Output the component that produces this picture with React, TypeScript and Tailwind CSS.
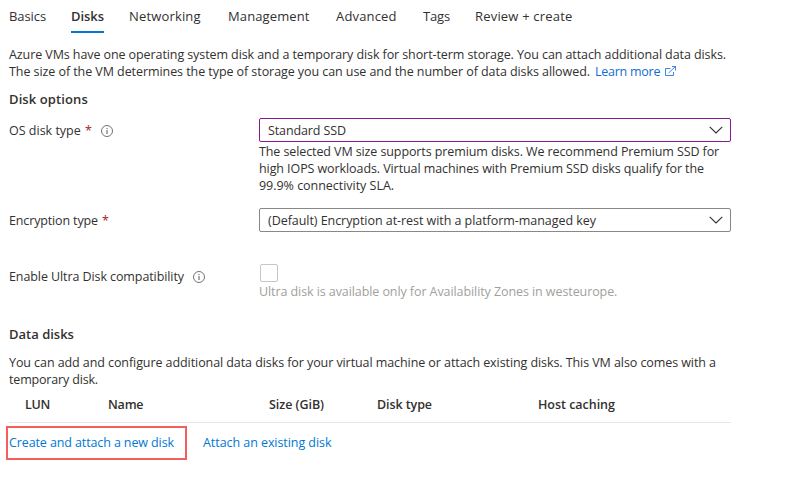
import type { ReactNode } from "react";

const tabs = [
  { label: "Basics", cls: "w-[37px] mr-[25px] tracking-[-0.09px]" },
  { label: "Disks", cls: "w-[33px] mr-[25px] tracking-[-0.05px]", active: true },
  { label: "Networking", cls: "w-[72px] mr-[27px] tracking-[0.16px]" },
  { label: "Management", cls: "w-[82px] mr-[26px] tracking-[0.12px]" },
  { label: "Advanced", cls: "w-[61px] mr-[26px] tracking-[0.17px]" },
  { label: "Tags", cls: "w-[27px] mr-[25px] tracking-[-0.16px]" },
  { label: "Review + create", cls: "tracking-[0.19px]" },
];

const columns = [
  { label: "LUN", cls: "w-[83px] tracking-[-0.25px]" },
  { label: "Name", cls: "w-[161px] tracking-[-0.2px]" },
  { label: "Size (GiB)", cls: "w-[108px] tracking-[-0.05px]" },
  { label: "Disk type", cls: "w-[161px] tracking-[-0.09px]" },
  { label: "Host caching", cls: "tracking-[-0.03px]" },
];

function InfoIcon() {
  return (
    <svg width="12" height="12" viewBox="0 0 12 12" fill="none" className="shrink-0">
      <circle cx="6" cy="6" r="5.5" stroke="#75726f" />
      <path d="M6 5V9M6 3V4.1" stroke="#75726f" strokeWidth="1.2" />
    </svg>
  );
}

function Required() {
  return <span className="ml-1 text-[#a4262c]">*</span>;
}

function Select({ border, children }: { border: string; children: ReactNode }) {
  return (
    <div className={`flex h-6 w-[472px] items-center justify-between rounded-[2px] border pr-[7px] pl-2 ${border}`}>
      {children}
      <svg width="14" height="8" viewBox="0 0 14 8" fill="none">
        <path d="M0.7 0.8L7 7L13.3 0.8" stroke="#323130" strokeWidth="1.15" />
      </svg>
    </div>
  );
}

export default function App() {
  return (
    <div className="h-[481px] w-[793px] overflow-hidden bg-white pl-[9px] font-['Open_Sans',sans-serif] text-[12.5px] leading-[17px] whitespace-nowrap text-[#323130]">
      <nav className="flex h-[33px] pt-[7px] text-[13px] leading-[18px]">
        {tabs.map((t) => (
          <div
            key={t.label}
            className={`h-[26px] ${t.cls} ${t.active ? "border-b-2 border-[#0078d4] font-semibold" : ""}`}
          >
            {t.label}
          </div>
        ))}
      </nav>

      <div className="mt-[13px]">
        <p className="tracking-[-0.089px]">
          Azure VMs have one operating system disk and a temporary disk for short-term storage. You can attach additional data disks.
        </p>
        <p className="flex">
          <span className="w-[586px] tracking-[-0.068px]">
            The size of the VM determines the type of storage you can use and the number of data disks allowed.
          </span>
          <a className="flex text-[#0f6cd6]">
            <span className="w-[70px] tracking-[-0.25px]">Learn more</span>
            <svg width="12" height="11" viewBox="0 0 12 11" fill="none" stroke="#2b7bdb" className="mt-[3px]">
              <path d="M5.5 2.5H0.5V9.5H8.5V6M3.5 7L10.5 0.5M7 0.5H10.5V4.5" strokeWidth="0.9" />
            </svg>
          </a>
        </p>
      </div>

      <h2 className="mt-[11px] text-[13px] font-semibold tracking-[0.1px]">Disk options</h2>

      <div className="mt-[10px] flex">
        <div className="flex w-[250px] pt-1">
          <span className="w-[72px]">OS disk type</span>
          <span className="w-5">
            <Required />
          </span>
          <span className="mt-[3px]">
            <InfoIcon />
          </span>
        </div>
        <div>
          <Select border="border-[#881798]">
            <span className="tracking-[-0.11px]">Standard SSD</span>
          </Select>
          <div className="mt-px">
            <p className="tracking-[-0.1px]">The selected VM size supports premium disks. We recommend Premium SSD for</p>
            <p className="tracking-[-0.086px]">high IOPS workloads. Virtual machines with Premium SSD disks qualify for the</p>
            <p className="tracking-[-0.03px]">99.9% connectivity SLA.</p>
          </div>
        </div>
      </div>

      <div className="mt-[14px] flex">
        <div className="flex w-[250px] pt-1">
          <span className="tracking-[-0.14px]">Encryption type</span>
          <Required />
        </div>
        <Select border="border-[#8a8886]">
          <span className="tracking-[-0.05px]">(Default) Encryption at-rest with a platform-managed key</span>
        </Select>
      </div>

      <div className="mt-8 flex">
        <div className="flex w-[250px] pt-1">
          <span className="w-[184px] tracking-[-0.09px]">Enable Ultra Disk compatibility</span>
          <span className="mt-[3px]">
            <InfoIcon />
          </span>
        </div>
        <div>
          <div className="ml-px size-[18px] rounded-[2px] border border-[#c8c6c4]" />
          <p className="mt-px tracking-[-0.083px] text-[#a19f9d]">
            Ultra disk is available only for Availability Zones in westeurope.
          </p>
        </div>
      </div>

      <h2 className="mt-[26px] text-[13px] font-semibold">Data disks</h2>
      <div className="mt-[11px]">
        <p className="tracking-[-0.078px]">
          You can add and configure additional data disks for your virtual machine or attach existing disks. This VM also comes with a
        </p>
        <p className="tracking-[-0.17px]">temporary disk.</p>
      </div>

      <div className="mt-2 flex h-[27px] w-[722px] border-b border-[#e6e6e6] pl-4 font-semibold">
        {columns.map((c) => (
          <span key={c.label} className={c.cls}>
            {c.label}
          </span>
        ))}
      </div>

      <div className="mt-[3px] -ml-[3px] flex text-[#0078d4]">
        <a className="h-[34px] w-[181px] border-2 border-[#f65e5e] pt-[6px] pl-px tracking-[-0.11px]">
          Create and attach a new disk
        </a>
        <a className="ml-4 pt-2 tracking-[-0.06px]">Attach an existing disk</a>
      </div>
    </div>
  );
}
